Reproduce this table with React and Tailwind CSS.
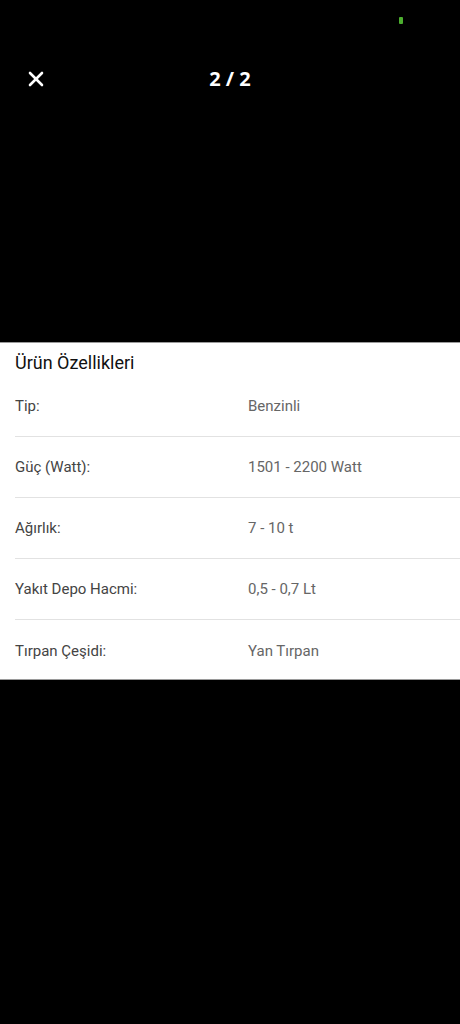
import { X } from "lucide-react";

const specs = [
  { label: "Tip:", value: "Benzinli" },
  { label: "Güç (Watt):", value: "1501 - 2200 Watt" },
  { label: "Ağırlık:", value: "7 - 10 t" },
  { label: "Yakıt Depo Hacmi:", value: "0,5 - 0,7 Lt" },
  { label: "Tırpan Çeşidi:", value: "Yan Tırpan" },
];

export default function App() {
  return (
    <div className="min-h-[1024px] w-[460px] bg-black font-['Roboto',sans-serif]">
      <div className="h-[342px] relative pt-[59px]">
        <div className="absolute left-[399px] top-[17px] w-[4px] h-[7px] bg-[#4caf2f] rounded-[1px]" />
        <div className="relative flex items-center h-[40px]">
          <button className="ml-[24px] text-white">
            <X size={24} strokeWidth={2.6} />
          </button>
          <div className="absolute left-0 right-0 text-center text-white text-[20px] font-bold font-['Open_Sans',sans-serif] pointer-events-none">
            2 / 2
          </div>
        </div>
      </div>

      <div className="bg-white border-t border-b border-[#9a9a9a]">
        <div className="px-[15px] pt-[10px] pb-[3px] text-[18px] leading-[20px] font-normal text-[#111]">
          Ürün Özellikleri
        </div>
        {specs.map((s, i) => (
          <div
            key={s.label}
            className={`ml-[15px] flex items-center text-[15px] ${
              i < specs.length - 1 ? "h-[61px] border-b border-[#e2e2e2]" : "h-[59px] pt-[3px]"
            }`}
          >
            <div className="w-[233px] text-[#444]">{s.label}</div>
            <div className="text-[#666]">{s.value}</div>
          </div>
        ))}
      </div>
    </div>
  );
}
